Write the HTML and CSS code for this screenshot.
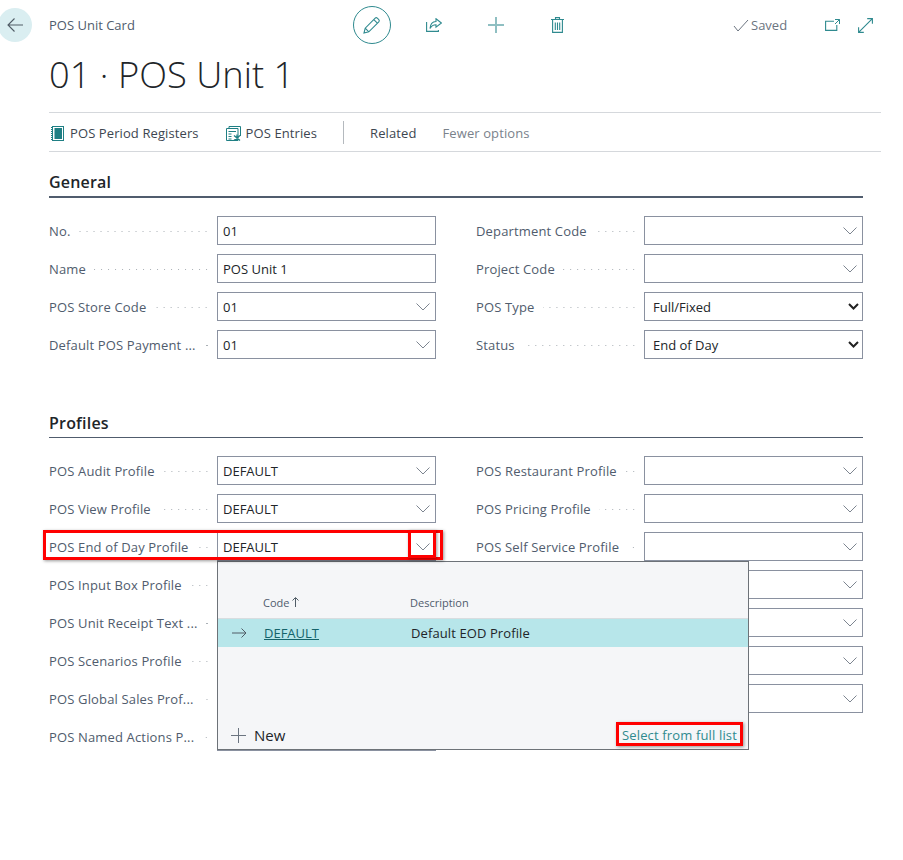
FILE: index.html
```html
<!DOCTYPE html>
<html lang="en">
<head>
  <meta charset="UTF-8">
  <title>POS Unit Card</title>
  <link rel="stylesheet" href="styles.css">
</head>
<body>
  <div class="page">
    <header class="topbar">
      <button class="back" aria-label="Back">
        <svg width="16" height="14" viewBox="0 0 16 14"><path d="M16 7H1M7.500 .5L1 7l6.500 6.500" fill="none" stroke="#505c66" stroke-width="1.100"/></svg>
      </button>
      <div class="crumb">POS Unit Card</div>
      <div class="tools">
        <span class="edit">
          <svg width="18" height="18" viewBox="0 0 18 18"><path d="M1 17l1.200-4.800L12.200 2.200a1.500 1.500 0 0 1 2.100 0l1.500 1.500a1.500 1.500 0 0 1 0 2.100L5.800 15.800zM2.200 12.200l3.600 3.600M10.800 3.600l3.600 3.600" fill="none" stroke="#2f8a8f" stroke-width="1.100"/></svg>
        </span>
        <svg class="tool-share" width="16" height="14" viewBox="0 0 16 14"><path d="M.6 4v9.400h11.800v-1.500" fill="none" stroke="#2f8a8f" stroke-width="1.100"/><path d="M10 .8L15.400 5 10 9.200V6.800C7.500 6.800 5.500 7.800 4 10.500c.3-4.500 2.800-6.800 6-7z" fill="none" stroke="#2f8a8f" stroke-width="1.100"/></svg>
        <svg class="tool-plus" width="16" height="16" viewBox="0 0 16 16"><path d="M8 0v16M0 8h16" stroke="#8fbfc2" stroke-width="2"/></svg>
        <svg class="tool-trash" width="13" height="16" viewBox="0 0 13 16"><path d="M0 2.500h13M4.500 2.500V.6h4v1.900M1.600 2.500v12.900h9.800V2.500M4.300 5.500v7.500M6.500 5.500v7.500M8.700 5.500v7.500" fill="none" stroke="#2f8a8f" stroke-width="1.100"/></svg>
      </div>
      <div class="status">
        <svg width="16" height="13" viewBox="0 0 16 13"><path d="M1 7l4 5L15 1" fill="none" stroke="#6b7480" stroke-width="1"/></svg>
        <span>Saved</span>
      </div>
      <svg class="tool-open" width="15" height="12" viewBox="0 0 15 12"><path d="M9 2.200H.6v9.200h11.200V6" fill="none" stroke="#2f8a8f" stroke-width="1.100"/><path d="M10 .5h4.500V5M14.500 .5L10 5" fill="none" stroke="#2f8a8f"/></svg>
      <svg class="tool-expand" width="15" height="15" viewBox="0 0 15 15"><path d="M14.400 .6L.6 14.400M9.200 .6h5.200v5.200M.6 9.200v5.200h5.200" fill="none" stroke="#2f8a8f" stroke-width="1.100"/></svg>
    </header>

    <h1 class="title">01 · POS Unit 1</h1>

    <nav class="actions">
      <span class="action action-registers">
        <svg width="13" height="15" viewBox="0 0 13 15"><rect x="1.500" y=".5" width="11" height="14" fill="#fff" stroke="#1f7f84"/><rect x="3.500" y="2" width="7.500" height="11" fill="#1f7f84"/><path d="M1 1v13" stroke="#1f7f84" stroke-dasharray="1 1" stroke-width="2"/></svg>
        POS Period Registers
      </span>
      <span class="action action-entries">
        <svg width="16" height="15" viewBox="0 0 16 15"><path d="M3 2.500V.5h11.500v9.500" fill="none" stroke="#1f7f84"/><path d="M.5 2.500h11.500v12H.5z" fill="#fff" stroke="#1f7f84"/><path d="M2.500 5.500h7.500M2.500 8h3M2.500 10.500h3M2.500 13h3" stroke="#1f7f84"/><path d="M8 9.500l6 5M14 9.500l-6 5M11 8.500v7" stroke="#1f7f84" stroke-width="1.300"/></svg>
        POS Entries
      </span>
      <span class="action-sep"></span>
      <span class="action">Related</span>
      <span class="action action-muted">Fewer options</span>
    </nav>

    <section class="general">
      <h2 class="section-head section-head-strong">General</h2>
      <div class="form">
        <div class="field"><label>No.</label><div class="box">01</div></div>
        <div class="field"><label>Department Code</label><div class="box"><svg class="chev"><use href="#chev"/></svg></div></div>
        <div class="field"><label>Name</label><div class="box">POS Unit 1</div></div>
        <div class="field"><label>Project Code</label><div class="box"><svg class="chev"><use href="#chev"/></svg></div></div>
        <div class="field"><label>POS Store Code</label><div class="box">01<svg class="chev"><use href="#chev"/></svg></div></div>
        <div class="field"><label>POS Type</label><div class="box box-select">Full/Fixed<svg class="caret"><use href="#caret"/></svg></div></div>
        <div class="field"><label>Default POS Payment ...</label><div class="box">01<svg class="chev"><use href="#chev"/></svg></div></div>
        <div class="field"><label>Status</label><div class="box box-select">End of Day<svg class="caret"><use href="#caret"/></svg></div></div>
      </div>
    </section>

    <section class="profiles">
      <h2 class="section-head">Profiles</h2>
      <div class="form">
        <div class="field"><label>POS Audit Profile</label><div class="box">DEFAULT<svg class="chev"><use href="#chev"/></svg></div></div>
        <div class="field"><label>POS Restaurant Profile</label><div class="box"><svg class="chev"><use href="#chev"/></svg></div></div>
        <div class="field"><label>POS View Profile</label><div class="box">DEFAULT<svg class="chev"><use href="#chev"/></svg></div></div>
        <div class="field"><label>POS Pricing Profile</label><div class="box"><svg class="chev"><use href="#chev"/></svg></div></div>
        <div class="field"><label>POS End of Day Profile</label><div class="box">DEFAULT<svg class="chev"><use href="#chev"/></svg></div></div>
        <div class="field"><label>POS Self Service Profile</label><div class="box"><svg class="chev"><use href="#chev"/></svg></div></div>
        <div class="field"><label>POS Input Box Profile</label><div class="box"></div></div>
        <div class="field"><label></label><div class="box"><svg class="chev"><use href="#chev"/></svg></div></div>
        <div class="field"><label>POS Unit Receipt Text ...</label><div class="box"></div></div>
        <div class="field"><label></label><div class="box"><svg class="chev"><use href="#chev"/></svg></div></div>
        <div class="field"><label>POS Scenarios Profile</label><div class="box"></div></div>
        <div class="field"><label></label><div class="box"><svg class="chev"><use href="#chev"/></svg></div></div>
        <div class="field"><label>POS Global Sales Prof...</label><div class="box"></div></div>
        <div class="field"><label></label><div class="box"><svg class="chev"><use href="#chev"/></svg></div></div>
        <div class="field"><label>POS Named Actions P...</label><div class="box"></div></div>
      </div>
    </section>
  </div>

  <!-- lookup dropdown, sits over the form -->
  <div class="lookup">
    <div class="lookup-head">
      <span class="col-code">Code <svg width="7" height="10" viewBox="0 0 7 10"><path d="M3.500 10V1M.5 3.500l3-3 3 3" fill="none" stroke="#505c66"/></svg></span>
      <span class="col-desc">Description</span>
    </div>
    <div class="lookup-row">
      <svg class="row-arrow" width="15" height="10" viewBox="0 0 15 10"><path d="M0 5h14M9.500.5L14 5 9.500 9.500" fill="none" stroke="#505c66"/></svg>
      <a class="row-code">DEFAULT</a>
      <span class="row-desc">Default EOD Profile</span>
    </div>
    <div class="lookup-foot">
      <span class="new"><svg width="15" height="15" viewBox="0 0 15 15"><path d="M7.500 0v15M0 7.500h15" stroke="#6b7480"/></svg>New</span>
      <a class="full-list">Select from full list</a>
    </div>
  </div>

  <!-- red annotations drawn on the screenshot -->
  <div class="mark mark-row"></div>
  <div class="mark mark-chev"></div>
  <div class="mark mark-list"></div>

  <svg class="defs" width="0" height="0">
    <symbol id="chev" viewBox="0 0 14 8"><path d="M.5 .5L7 7l6.500-6.500" fill="none" stroke="#7d8590"/></symbol>
    <symbol id="caret" viewBox="0 0 11 7"><path d="M1 1l4.500 4.500L10 1" fill="none" stroke="#222" stroke-width="2"/></symbol>
  </svg>
</body>
</html>
```
FILE: styles.css
```css
* {
  box-sizing: border-box;
}
body {
  margin: 0;
  font-family: "Open Sans", "Noto Sans", sans-serif;
  font-size: 13px;
  color: #212529;
  background: #fff;
}
.page {
  padding: 6px 22px 0 49px;
  min-height: 860px;
}
.defs {
  position: absolute;
}

/* top bar */
.topbar {
  display: flex;
  align-items: center;
  height: 38px;
}
.back {
  width: 34px;
  height: 34px;
  margin-left: -51px;
  margin-right: 17px;
  border: 0;
  border-radius: 50%;
  background: #daeef1;
  padding: 0;
  display: flex;
  align-items: center;
  justify-content: center;
}
.crumb {
  width: 304px;
  color: #505c6d;
}
.tools {
  display: flex;
  align-items: center;
  width: 380px;
}
.edit {
  width: 38px;
  height: 38px;
  border: 1px solid #2f8a8f;
  border-radius: 50%;
  display: flex;
  align-items: center;
  justify-content: center;
}
.tool-share {
  margin-left: 35px;
}
.tool-plus {
  margin-left: 46px;
}
.tool-trash {
  margin-left: 47px;
}
.status {
  display: flex;
  align-items: center;
  gap: 2px;
  color: #6b7480;
  width: 92px;
}
.tool-expand {
  margin-left: 18px;
}
.title {
  margin: 5px 0 0;
  font-size: 36.3px;
  font-weight: 300;
  line-height: 50px;
  color: #212529;
  height: 63px;
}

/* action bar */
.actions {
  display: flex;
  align-items: center;
  height: 40px;
  padding-top: 2px;
  border-top: 1px solid #d5d8dc;
  border-bottom: 1px solid #d5d8dc;
  color: #3d4650;
  letter-spacing: 0.1px;
}
.action {
  display: flex;
  align-items: center;
  gap: 5px;
}
.action-registers {
  margin-left: 2px;
  gap: 6px;
}
.action-entries {
  margin-left: 27px;
  gap: 4px;
}
.action-sep {
  width: 1px;
  height: 23px;
  margin: -2px 26px 0 26px;
  background: #b4b9be;
}
.action-muted {
  margin-left: 26px;
  color: #7a828b;
}

/* sections */
.section-head {
  width: 814px;
  margin: 0;
  font-size: 16px;
  font-weight: 600;
  line-height: 22px;
  letter-spacing: 0.2px;
  padding-bottom: 3px;
  border-bottom: 1px solid #505c6d;
}
.section-head-strong {
  border-bottom-width: 2px;
}
.general {
  padding-top: 19px;
}
.profiles {
  padding-top: 53px;
}
.form {
  width: 814px;
  margin-top: 18px;
  display: grid;
  grid-template-columns: 387px 387px;
  column-gap: 40px;
  row-gap: 9px;
}
.field {
  display: flex;
  align-items: center;
  height: 29px;
}
.field label {
  display: flex;
  width: 168px;
  flex: none;
  color: #505c6d;
  letter-spacing: 0.15px;
  white-space: nowrap;
}
/* dotted leader between label and input */
.field label::after {
  content: "";
  flex: 1;
  min-width: 0;
  margin: 0 7px 0 8px;
  background-image: radial-gradient(circle, #aab0b6 0.7px, transparent 1px);
  background-size: 7px 3px;
  background-repeat: repeat-x;
  background-position: right 8px;
}
.box {
  flex: 1;
  height: 29px;
  border: 1px solid #8a91a0;
  padding: 1px 0 0 5px;
  line-height: 27px;
  color: #212529;
  position: relative;
}
.box-select {
  padding-left: 8px;
}
.chev {
  position: absolute;
  right: 5px;
  top: 10px;
  width: 14px;
  height: 8px;
}
.caret {
  position: absolute;
  right: 3px;
  top: 10px;
  width: 11px;
  height: 7px;
}

/* lookup dropdown */
.lookup {
  position: absolute;
  left: 217px;
  top: 561px;
  width: 532px;
  height: 189px;
  background: #f5f6f8;
  border: 1px solid #6d7278;
  display: flex;
  flex-direction: column;
}
.lookup-head {
  display: flex;
  align-items: center;
  height: 56px;
  padding-top: 25px;
  font-size: 11px;
  color: #505c6d;
}
.col-code {
  margin-left: 45px;
  width: 147px;
}
.lookup-row {
  display: flex;
  align-items: center;
  height: 29px;
  background: #b7e6ea;
  border-top: 1px solid #d8dde0;
  letter-spacing: 0.1px;
}
.row-arrow {
  margin-left: 14px;
}
.row-code {
  margin-left: 17px;
  width: 147px;
  color: #15636a;
  text-decoration: underline;
  letter-spacing: 0;
}
.lookup-foot {
  margin-top: auto;
  display: flex;
  align-items: center;
  justify-content: space-between;
  height: 28px;
  padding: 0 11px 0 13px;
}
.new {
  display: flex;
  align-items: center;
  gap: 8px;
  font-size: 15px;
}
.full-list {
  color: #2f8a8f;
  letter-spacing: 0.15px;
}

/* annotations */
.mark {
  position: absolute;
  border: 3px solid #f00;
  box-shadow: 1px 1px 3px rgba(0, 0, 0, 0.4);
}
.mark-row {
  left: 43px;
  top: 530px;
  width: 400px;
  height: 30px;
}
.mark-chev {
  left: 408px;
  top: 530px;
  width: 28px;
  height: 28px;
}
.mark-list {
  left: 616px;
  top: 722px;
  width: 127px;
  height: 24px;
}
```
